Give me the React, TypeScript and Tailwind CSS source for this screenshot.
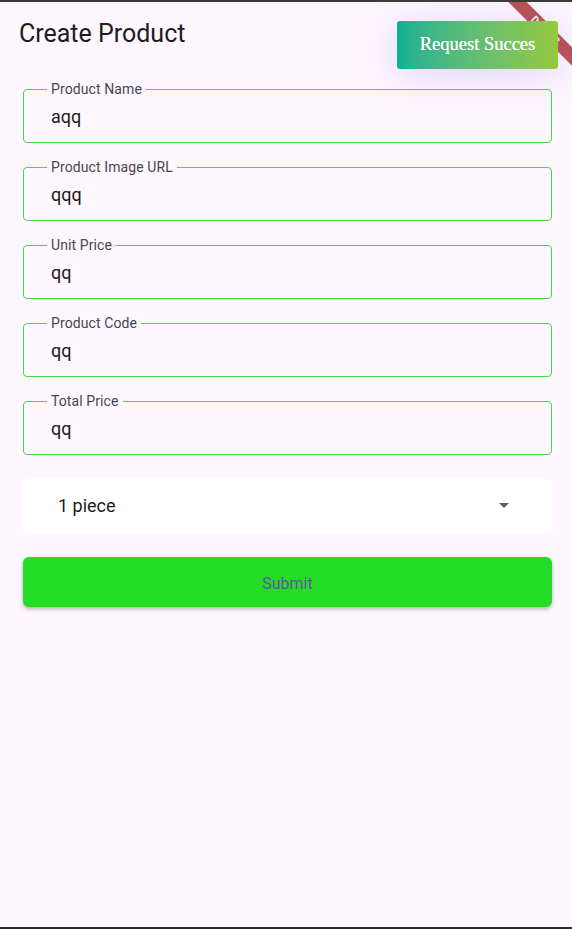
import React from "react";

const fields = [
  { label: "Product Name", value: "aqq" },
  { label: "Product Image URL", value: "qqq" },
  { label: "Unit Price", value: "qq" },
  { label: "Product Code", value: "qq" },
  { label: "Total Price", value: "qq" },
];

function Field({ label, value }: { label: string; value: string }) {
  return (
    <div className="relative h-[54px] rounded-[4px] border border-[#44d944] flex items-center pl-[27px]">
      <span className="absolute left-[23px] top-[-9px] px-[4px] bg-[#fef7ff] text-[14px] leading-[16px] text-[#49454f] tracking-[0.1px]">
        {label}
      </span>
      <span className="text-[18px] leading-[24px] text-[#1d1b20] mt-[1px]">{value}</span>
    </div>
  );
}

export default function App() {
  return (
    <div
      className="relative w-[572px] h-[929px] overflow-hidden bg-[#fef7ff] border-t-2 border-t-[#3a3a3a] border-b-2 border-b-[#2a2a2a]"
      style={{ fontFamily: "Roboto, 'Noto Sans', sans-serif" }}
    >
      <header className="h-[56px] flex items-center pl-[19px]">
        <h1 className="text-[25px] leading-[30px] text-[#1d1b20] mt-[8px]">Create Product</h1>
      </header>

      <div className="ml-[23px] mr-[20px] mt-[31px] flex flex-col gap-[24px]">
        {fields.map((f) => (
          <Field key={f.label} label={f.label} value={f.value} />
        ))}

        <div className="h-[54px] rounded-[4px] bg-white flex items-center pl-[35px] pr-[42px] justify-between">
          <span className="text-[18px] leading-[24px] text-[#1d1b20]">1 piece</span>
          <svg width="12" height="6" viewBox="0 0 12 6">
            <path d="M1 0 L11 0 L6 5 Z" fill="#5f5f5f" />
          </svg>
        </div>

        <button className="h-[50px] rounded-[6px] bg-[#24dd27] shadow-[0_2px_4px_rgba(0,0,0,0.3)] text-[16px] leading-[20px] pt-[3px] text-[#6750a4] flex items-center justify-center">
          Submit
        </button>
      </div>

      {/* debug banner */}
      <div className="absolute left-[496px] top-[22px] w-[100px] h-[13px] rotate-45 bg-[rgba(170,40,40,0.8)] flex items-center justify-center">
        <span className="text-[10px] leading-[12px] font-bold text-white tracking-[1px]">DEBUG</span>
      </div>

      {/* toast */}
      <div
        className="absolute left-[397px] top-[19px] w-[161px] h-[48px] rounded-[3px] bg-gradient-to-r from-[#07b095] to-[#94c93c] shadow-[0_6px_40px_rgba(110,90,220,0.22)] flex items-center justify-center"
      >
        <span
          className="text-[18.5px] text-white [text-shadow:0_0_0.4px_#fff]"
          style={{ fontFamily: "'Liberation Serif', 'DejaVu Serif', serif" }}
        >
          Request Succes
        </span>
      </div>
    </div>
  );
}
